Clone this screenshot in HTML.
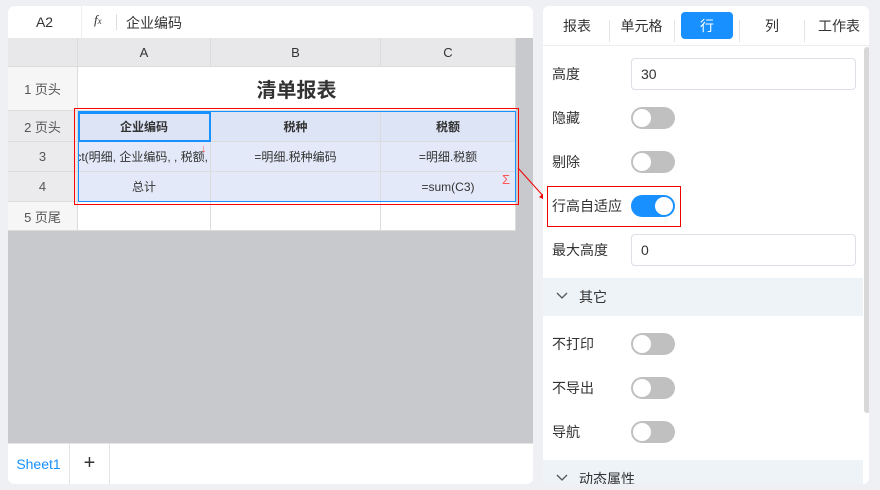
<!DOCTYPE html><html><head><meta charset="utf-8"><style>
*{box-sizing:border-box;margin:0;padding:0}
body{width:880px;height:490px;background:#eef0f3;font-family:"Liberation Sans","Noto Sans CJK SC",sans-serif;font-size:13px;color:#333;position:relative;overflow:hidden}
.a{position:absolute}
.left{left:8px;top:6px;width:525px;height:478px;background:#c8c9cc;border-radius:6px;overflow:hidden}
.fb{left:0;top:0;width:525px;height:32px;background:#fff}
.cell{position:absolute;display:flex;align-items:center;justify-content:center;border-right:1px solid #dcdcdc;border-bottom:1px solid #dcdcdc;white-space:nowrap;overflow:hidden;font-size:12px}
.rh{background:#f6f6f7;color:#555;font-size:13px}
.ch{background:#e8e8ea;font-size:13px}
.sel{background:#e3e9f8}
.right{left:543px;top:6px;width:326px;height:478px;background:#fff;border-radius:6px;overflow:hidden}
.tab{position:absolute;top:6px;height:27px;display:flex;align-items:center;justify-content:center;font-size:14px;color:#333}
.lbl{position:absolute;left:9px;font-size:14px;color:#333;line-height:20px}
.inp{position:absolute;left:88px;width:225px;height:32px;border:1px solid #dcdfe6;border-radius:4px;padding-left:9px;line-height:30px;font-size:14px}
.sw{position:absolute;left:88px;width:44px;height:22px;border-radius:11px;background:#c0c0c0}
.sw::after{content:"";position:absolute;left:2px;top:2px;width:18px;height:18px;border-radius:50%;background:#fff}
.sw.on{background:#1890ff}.sw.on::after{left:24px}
.sec{position:absolute;left:0;width:320px;height:38px;background:#eef3f8;font-size:14px}
</style></head><body>
<div class="a left">
 <div class="a fb">
  <div class="a" style="left:0;top:0;width:74px;height:32px;line-height:32px;text-align:center;font-size:14px;border-right:1px solid #eee">A2</div>
  <div class="a" style="left:86px;top:6px;font-style:italic;font-family:'Liberation Serif',serif;font-size:13px">f<span style="font-size:9px">x</span></div>
  <div class="a" style="left:108px;top:8px;width:1px;height:16px;background:#ddd"></div>
  <div class="a" style="left:118px;top:7px;font-size:14px">企业编码</div>
 </div>
 <div class="cell ch" style="left:0;top:32px;width:70px;height:29px"></div>
 <div class="cell ch" style="left:70px;top:32px;width:133px;height:29px">A</div>
 <div class="cell ch" style="left:203px;top:32px;width:170px;height:29px">B</div>
 <div class="cell ch" style="left:373px;top:32px;width:135px;height:29px">C</div>
 <div class="cell rh" style="left:0;top:61px;width:70px;height:44px">1 页头</div>
 <div class="cell" style="left:70px;top:61px;width:438px;height:44px;background:#fff;font-size:20px;font-weight:bold;color:#333">清单报表</div>
 <div class="cell rh" style="left:0;top:105px;width:70px;height:31px;background:#ebebed">2 页头</div>
 <div class="cell sel" style="left:70px;top:105px;width:133px;height:31px;font-weight:bold;background:#dde4f5">企业编码</div>
 <div class="cell sel" style="left:203px;top:105px;width:170px;height:31px;font-weight:bold;background:#dde4f5">税种</div>
 <div class="cell sel" style="left:373px;top:105px;width:135px;height:31px;font-weight:bold;background:#dde4f5">税额</div>
 <div class="cell rh" style="left:0;top:136px;width:70px;height:30px;background:#ebebed">3</div>
 <div class="cell sel" style="left:70px;top:136px;width:133px;height:30px;justify-content:flex-end;padding-right:2px">ct(明细, 企业编码, , 税额,</div>
 <div class="cell sel" style="left:203px;top:136px;width:170px;height:30px">=明细.税种编码</div>
 <div class="cell sel" style="left:373px;top:136px;width:135px;height:30px">=明细.税额</div>
 <div class="cell rh" style="left:0;top:166px;width:70px;height:30px;background:#ebebed">4</div>
 <div class="cell sel" style="left:70px;top:166px;width:133px;height:30px">总计</div>
 <div class="cell sel" style="left:203px;top:166px;width:170px;height:30px"></div>
 <div class="cell sel" style="left:373px;top:166px;width:135px;height:30px">=sum(C3)</div>
 <div class="cell rh" style="left:0;top:196px;width:70px;height:29px">5 页尾</div>
 <div class="cell" style="left:70px;top:196px;width:133px;height:29px;background:#fff"></div>
 <div class="cell" style="left:203px;top:196px;width:170px;height:29px;background:#fff"></div>
 <div class="cell" style="left:373px;top:196px;width:135px;height:29px;background:#fff"></div>
 <div class="a" style="left:70px;top:106px;width:133px;height:30px;border:2px solid #1890ff"></div>
 <div class="a" style="left:70px;top:105px;width:438px;height:91px;border:1px solid #1890ff"></div>
 <div class="a" style="left:66px;top:102px;width:445px;height:97px;border:1px solid #f00"></div>
 <div class="a" style="left:193px;top:137px;color:#f55;font-size:11px">↓</div>
 <div class="a" style="left:494px;top:166px;color:#f55;font-size:13px">Σ</div>
 <div class="a" style="left:0;top:437px;width:525px;height:41px;background:#fff;border-top:1px solid #e4e4e4">
  <div class="a" style="left:0;top:0;width:62px;height:40px;line-height:40px;text-align:center;color:#1890ff;font-size:14px;border-right:1px solid #e4e4e4">Sheet1</div>
  <div class="a" style="left:62px;top:0;width:40px;height:40px;line-height:38px;text-align:center;font-size:20px;border-right:1px solid #e4e4e4">+</div>
 </div>
</div>
<svg class="a" style="left:515px;top:165px" width="35" height="40"><line x1="3" y1="3" x2="30" y2="33" stroke="#e00" stroke-width="1"/><path d="M32 36 L24 32 L29 28 Z" fill="#e00"/></svg>
<div class="a right">
 <div class="tab" style="left:8px;width:52px">报表</div>
 <div class="a" style="left:66px;top:14px;width:1px;height:22px;background:#e4e4e4"></div>
 <div class="tab" style="left:71px;width:55px">单元格</div>
 <div class="a" style="left:131px;top:14px;width:1px;height:22px;background:#e4e4e4"></div>
 <div class="tab" style="left:138px;width:52px;background:#1890ff;color:#fff;border-radius:4px">行</div>
 <div class="a" style="left:196px;top:14px;width:1px;height:22px;background:#e4e4e4"></div>
 <div class="tab" style="left:203px;width:52px">列</div>
 <div class="a" style="left:261px;top:14px;width:1px;height:22px;background:#e4e4e4"></div>
 <div class="tab" style="left:266px;width:60px">工作表</div>
 <div class="a" style="left:0;top:39px;width:326px;height:1px;background:#eee"></div>
 <div class="lbl" style="top:58px">高度</div><div class="inp" style="top:52px">30</div>
 <div class="lbl" style="top:102px">隐藏</div><div class="sw" style="top:101px"></div>
 <div class="lbl" style="top:146px">剔除</div><div class="sw" style="top:145px"></div>
 <div class="a" style="left:4px;top:180px;width:134px;height:41px;border:1px solid #e00"></div>
 <div class="lbl" style="top:190px">行高自适应</div><div class="sw on" style="top:189px"></div>
 <div class="lbl" style="top:234px">最大高度</div><div class="inp" style="top:228px">0</div>
 <div class="sec" style="top:272px"><svg class="a" style="left:13px;top:14px" width="12" height="8"><path d="M1 1 L6 6 L11 1" stroke="#555" stroke-width="1.3" fill="none"/></svg><span class="a" style="left:36px;top:9px">其它</span></div>
 <div class="lbl" style="top:328px">不打印</div><div class="sw" style="top:327px"></div>
 <div class="lbl" style="top:372px">不导出</div><div class="sw" style="top:371px"></div>
 <div class="lbl" style="top:416px">导航</div><div class="sw" style="top:415px"></div>
 <div class="sec" style="top:454px"><svg class="a" style="left:13px;top:14px" width="12" height="8"><path d="M1 1 L6 6 L11 1" stroke="#555" stroke-width="1.3" fill="none"/></svg><span class="a" style="left:36px;top:9px">动态属性</span></div>
 <div class="a" style="left:321px;top:41px;width:6px;height:366px;background:#d8d8d8;border-radius:3px"></div>
</div>
</body></html>
